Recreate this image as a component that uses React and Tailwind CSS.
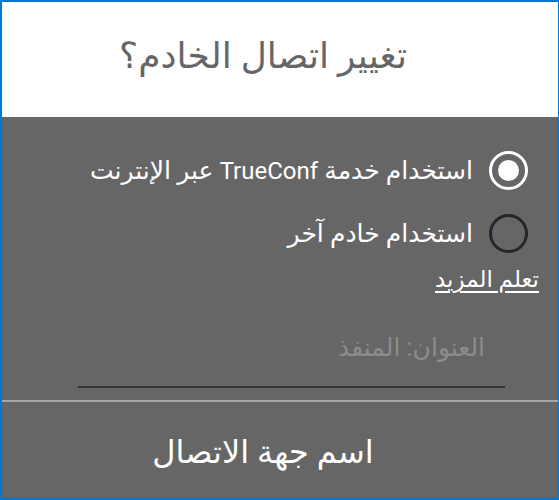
import React from 'react';

const RadioOption = ({ checked, children }) => {
  return (
    <div className="flex items-center gap-[16px] h-[40px]">
      <span
        className={`shrink-0 w-[39px] h-[39px] rounded-full border-[3px] flex items-center justify-center ${
          checked ? 'border-white' : 'border-[#262626]'
        }`}
      >
        {checked && <span className="w-[21px] h-[21px] rounded-full bg-white" />}
      </span>
      <span className="text-[25px] text-white leading-none whitespace-nowrap">{children}</span>
    </div>
  );
};

const App = () => {
  return (
    <div
      dir="rtl"
      className="w-[559px] h-[500px] border-2 border-[#0078d7] border-r-[1px] flex flex-col overflow-hidden"
      style={{ fontFamily: 'Roboto, "DejaVu Sans", sans-serif' }}
    >
      <div className="bg-white h-[115px] shrink-0 flex items-center justify-center pr-[34px] pb-[8px]">
        <h1 className="text-[36px] text-[#666666] font-normal leading-none">تغيير اتصال الخادم؟</h1>
      </div>
      <div className="flex-1 bg-[#666666] flex flex-col">
        <div className="pr-[30px] pt-[33px] flex flex-col gap-[23px]">
          <RadioOption checked>
            استخدام خدمة <span className="text-[24px]">TrueConf</span> عبر الإنترنت
          </RadioOption>
          <RadioOption>استخدام خادم آخر</RadioOption>
        </div>
        <div className="pr-[19px] mt-[15px]">
          <a className="text-[23px] text-white underline underline-offset-4 leading-none">تعلم المزيد</a>
        </div>
        <div className="pr-[53px] pl-[76px] mt-[41px]">
          <div className="border-b-2 border-[#333333] pb-[26px] pr-[20px] text-[25px] text-[#8c8c8c] leading-none">
            العنوان: المنفذ
          </div>
        </div>
        <div className="mt-[12px] h-[2px] bg-[#a6a6a6]" />
        <div className="flex-1 flex items-center justify-center pr-[34px] pt-[4px]">
          <span className="text-[32px] text-white leading-none">اسم جهة الاتصال</span>
        </div>
      </div>
    </div>
  );
};

export default App;
